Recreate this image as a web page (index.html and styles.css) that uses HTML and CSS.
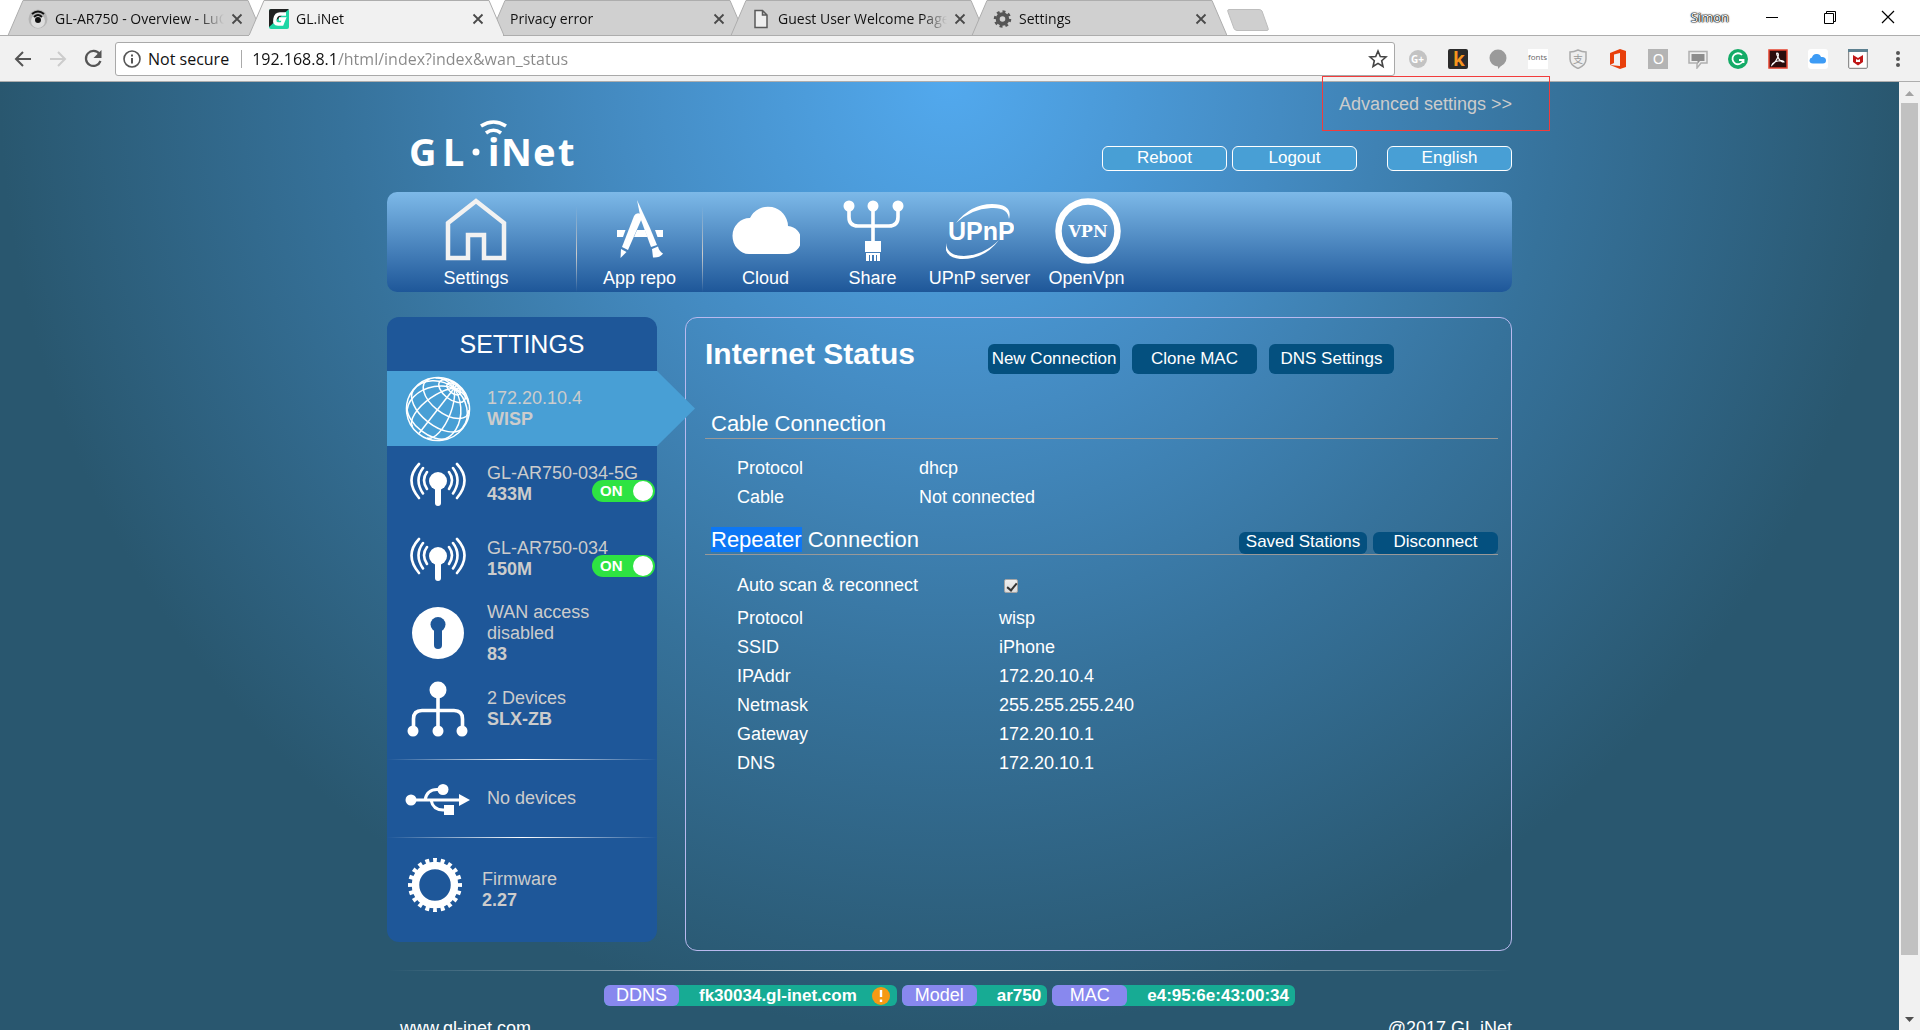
FILE: index.html
```html
<!DOCTYPE html>
<html lang="en">
<head>
<meta charset="utf-8">
<title>GL.iNet</title>
<link rel="stylesheet" href="styles.css">
</head>
<body>
<svg width="0" height="0" class="defs" aria-hidden="true">
  <symbol id="tab-shape" viewBox="0 0 256 36"><path d="M0 35.5H1L16 .5H241L256 35.500Z" fill="var(--tab-fill)" stroke="#adadad"/></symbol>
  <symbol id="x" viewBox="0 0 12 12"><path d="M1.500 1.500L10.500 10.500M10.500 1.500L1.500 10.500" stroke="#4a4a4a" stroke-width="1.800"/></symbol>
  <symbol id="antenna" viewBox="0 0 56 44">
    <circle cx="28" cy="19" r="9" fill="#fff"/><path d="M28 19V41" stroke="#fff" stroke-width="6" stroke-linecap="round"/>
    <g fill="none" stroke="#fff" stroke-width="2.600" stroke-linecap="round">
      <path d="M17 10Q11 18 17 27M13 6Q4 18 13 31.500M9 2Q-6 18 9 36"/>
      <path d="M39 10Q45 18 39 27M43 6Q52 18 43 31.500M47 2Q62 18 47 36"/>
    </g>
  </symbol>
</svg>

<header class="tabstrip">
  <nav class="tabs" aria-label="Tabs">
    <div class="tab"><svg class="tab-bg"><use href="#tab-shape"/></svg>
      <svg class="fav" viewBox="0 0 20 20"><circle cx="10" cy="10" r="9.500" fill="#b5b5b5"/><circle cx="10" cy="12" r="7" fill="#ddd"/><circle cx="10" cy="11" r="3" fill="#111"/><path d="M4 5Q10 0 16 5M6 8Q10 4 14 8" fill="none" stroke="#111" stroke-width="2"/></svg>
      <span class="tab-title">GL-AR750 - Overview - LuCI</span><svg class="tab-x"><use href="#x"/></svg></div>
    <div class="tab active"><svg class="tab-bg"><use href="#tab-shape"/></svg>
      <svg class="fav" viewBox="0 0 20 20"><rect width="20" height="20" rx="2" fill="#1ed6a5"/><path d="M0 2Q0 0 2 0H20L0 18Z" fill="#222"/><path d="M17 5H11Q7 5 6 10Q5 15 9 15H13L15 10H10" fill="none" stroke="#fff" stroke-width="3.500"/></svg>
      <span class="tab-title">GL.iNet</span><svg class="tab-x"><use href="#x"/></svg></div>
    <div class="tab"><svg class="tab-bg"><use href="#tab-shape"/></svg>
      <span class="tab-title">Privacy error</span><svg class="tab-x"><use href="#x"/></svg></div>
    <div class="tab"><svg class="tab-bg"><use href="#tab-shape"/></svg>
      <svg class="fav" viewBox="0 0 20 20"><path d="M4 1.500H11.500L16 6V18.500H4ZM11.500 1.500V6H16" fill="#eee" stroke="#5a5a5a" stroke-width="1.500"/></svg>
      <span class="tab-title">Guest User Welcome Page</span><svg class="tab-x"><use href="#x"/></svg></div>
    <div class="tab"><svg class="tab-bg"><use href="#tab-shape"/></svg>
      <svg class="fav" viewBox="0 0 20 20"><circle cx="10.500" cy="10" r="4.800" fill="none" stroke="#555" stroke-width="4"/><circle cx="10.500" cy="10" r="7.500" fill="none" stroke="#555" stroke-width="2.500" pathLength="16" stroke-dasharray="1 1"/></svg>
      <span class="tab-title">Settings</span><svg class="tab-x"><use href="#x"/></svg></div>
    <button class="new-tab" aria-label="New tab"><svg viewBox="0 0 42 22"><path d="M2 .5H32Q34 .5 35 2L41 19Q42 21.500 40 21.500H10Q8 21.500 7 19.500L1 3Q0 .5 2 .5Z" fill="#cfcfcf" stroke="#bdbdbd"/></svg></button>
  </nav>
  <div class="window-controls">
    <span class="user">Simon</span>
    <button aria-label="Minimize"><svg viewBox="0 0 14 14"><path d="M1 7.500H13" stroke="#000"/></svg></button>
    <button aria-label="Restore"><svg viewBox="0 0 14 14"><path d="M1.500 3.500H10.500V13.500H1.500ZM3.500 3.500V1.500H12.500V11.500H10.500" fill="none" stroke="#000"/></svg></button>
    <button aria-label="Close"><svg viewBox="0 0 14 14"><path d="M1 1L13 13M13 1L1 13" stroke="#000" stroke-width="1.200"/></svg></button>
  </div>
</header>

<div class="toolbar">
  <button aria-label="Back"><svg viewBox="0 0 20 20"><path d="M18 10H3M10 3L3 10L10 17" fill="none" stroke="#555" stroke-width="2"/></svg></button>
  <button aria-label="Forward"><svg viewBox="0 0 20 20"><path d="M2 10H17M10 3L17 10L10 17" fill="none" stroke="#ccc" stroke-width="2"/></svg></button>
  <button aria-label="Reload"><svg viewBox="0 0 20 20"><path d="M16.500 5A7.500 7.500 0 1 0 17.500 12" fill="none" stroke="#555" stroke-width="2.200"/><path d="M18.500 1V9H10.500Z" fill="#555"/></svg></button>
  <div class="omnibox">
    <svg viewBox="0 0 20 20"><circle cx="10" cy="10" r="8" fill="none" stroke="#555" stroke-width="1.600"/><path d="M10 9V14.500M10 5.500V7.500" stroke="#555" stroke-width="2"/></svg>
    <span class="secure">Not secure</span>
    <input class="url" type="text" aria-label="Address" value="192.168.8.1/html/index?index&amp;wan_status">
    <svg viewBox="0 0 20 20"><path d="M10 2L12.300 7.500L18 8L13.700 11.700L15 17.500L10 14.400L5 17.500L6.300 11.700L2 8L7.700 7.500Z" fill="none" stroke="#444" stroke-width="1.600"/></svg>
  </div>
  <div class="extensions">
    <svg viewBox="0 0 20 20"><circle cx="10" cy="10" r="9" fill="#c3c3c3"/><text x="3" y="14" class="ico-g">G+</text></svg>
    <svg viewBox="0 0 20 20"><rect width="20" height="20" rx="2" fill="#2b2b2b"/><text x="5" y="17" class="ico-k">k</text></svg>
    <svg viewBox="0 0 20 20"><circle cx="10" cy="9" r="8.500" fill="#9a9a9a"/><path d="M10 16V20L15 15Z" fill="#9a9a9a"/></svg>
    <svg viewBox="0 0 20 20"><rect width="20" height="20" fill="#fff"/><text x="0" y="11" class="ico-f">fonts</text></svg>
    <svg viewBox="0 0 20 20"><path d="M10 1Q14 3 18 3V10Q18 16 10 19.500Q2 16 2 10V3Q6 3 10 1Z" fill="#eee" stroke="#aaa" stroke-width="1.500"/><text x="5" y="14" class="ico-z">支</text></svg>
    <svg viewBox="0 0 20 20"><path d="M2 4L12 0L18 2V18L12 20L2 16L12 17V4L6 5.500V14L2 16Z" fill="#e8400c"/></svg>
    <svg viewBox="0 0 20 20"><rect width="20" height="20" fill="#b4b4b4"/><text x="5" y="15" class="ico-o">O</text></svg>
    <svg viewBox="0 0 20 20"><path d="M1 2.500H19V14H13L9 19V14H1Z" fill="#eee" stroke="#b0b0b0" stroke-width="1.500"/><path d="M3.500 5H16.500V12H12L9.500 15V12H3.500Z" fill="#8d8d8d"/></svg>
    <svg viewBox="0 0 20 20"><circle cx="10" cy="10" r="10" fill="#14ab67"/><path d="M14 6A5.500 5.500 0 1 0 15 12M11 11H15.500V14" fill="none" stroke="#fff" stroke-width="1.800"/></svg>
    <svg viewBox="0 0 20 20"><rect x="1" y="1" width="18" height="18" fill="#2a0c0c" stroke="#e5432f" stroke-width="1.500"/><path d="M9 4Q11 4 10 8Q8 13 4 16Q5 13 10 12Q16 11 16 13Q12 13 10 8Q8 5 9 4Z" fill="none" stroke="#fff" stroke-width="1.200"/></svg>
    <svg viewBox="0 0 20 20"><rect width="20" height="20" rx="3" fill="#fff"/><path d="M5 14.500Q1.500 14.500 1.500 11.500Q1.500 9 4 8.500Q5 4.500 9 5Q12 5 13 8Q18 7.500 18 11.500Q18 14.500 15 14.500Z" fill="#3d9bf5"/></svg>
    <svg viewBox="0 0 20 20"><rect x=".7" y=".7" width="18.600" height="18.600" rx="1" fill="#fff" stroke="#777"/><rect width="20" height="3" fill="#5d8191"/><path d="M5 6L10 9L15 6V13L10 16.500L5 13Z" fill="#c01818"/><path d="M8 10L10 11L12 10V13H8Z" fill="#fff"/></svg>
    <svg viewBox="0 0 20 20"><g fill="#555"><circle cx="10" cy="4" r="2"/><circle cx="10" cy="10" r="2"/><circle cx="10" cy="16" r="2"/></g></svg>
  </div>
</div>

<div class="page">
  <div class="viewport">
    <div class="container">
      <header class="masthead">
        <svg class="logo" viewBox="0 0 168 54" role="img" aria-label="GL-iNet">
          <g class="logo-text"><text x="0" y="49">G</text><text x="34" y="49">L</text><text x="79" y="49">i</text><text x="92" y="49">N</text><text x="124" y="49">e</text><text x="149" y="49">t</text></g>
          <circle cx="67" cy="35" r="3.500" fill="#fff"/>
          <path d="M77 16Q84.500 10.500 92 16M72 9Q84.500 1 97 9" fill="none" stroke="#fff" stroke-width="3.600"/>
        </svg>
        <div class="head-right">
          <a class="advanced" href="#">Advanced settings &gt;&gt;</a>
          <div class="head-buttons"><button>Reboot</button><button>Logout</button><button class="lang">English</button></div>
        </div>
        <div class="annotation"></div>
      </header>

      <nav class="mainnav" aria-label="Main">
        <a href="#" class="nav-settings"><svg viewBox="0 0 68 68"><path d="M6 27L34 5L62 27V62H42V39H26V62H6Z" fill="none" stroke="#f2f2f2" stroke-width="4.500"/></svg>Settings</a>
        <i class="sep"></i>
        <a href="#" class="nav-repo"><svg viewBox="0 0 68 68"><g fill="#fff"><path d="M11 34H19.500L17 41H11ZM31 34H39L41.500 41H28ZM49 34H57V41H51.500Z"/><path d="M28 20Q30 16 35 18L36 22L22 54L16 51Z"/><path d="M15 53L20.500 56L14.500 62Z"/><path d="M31 4L44 32L51 49L45 51L35 24Z"/><path d="M46 53L52 50.500Q53 55 57 57.500Q54 62 47 61.500Z"/></g></svg>App repo</a>
        <i class="sep last"></i>
        <a href="#"><svg viewBox="0 0 68 68"><path d="M17 58A17 18 0 0 1 18 22A20 20 0 0 1 56 30A14 14 0 0 1 54 58Z" fill="#fff"/></svg>Cloud</a>
        <a href="#"><svg viewBox="0 0 68 68"><g fill="#fff"><circle cx="10" cy="10" r="5.500"/><circle cx="34" cy="10" r="5.500"/><circle cx="59" cy="10" r="5.500"/><rect x="26" y="45" width="16" height="11"/><path d="M27 57H41V65H38V59H37V65H35V59H33V65H31V59H30V65H27Z"/></g><path d="M10 10V21Q10 30 19 30H50Q59 30 59 21V10M34 10V46" fill="none" stroke="#fff" stroke-width="3.600"/></svg>Share</a>
        <a href="#"><svg viewBox="0 0 68 68"><path d="M10 27Q25 8 46 8Q67 8 63 23Q62 11 45 12Q25 13 10 27ZM0 47Q1 60 18 60Q38 59 53 44Q38 64 14 63Q-3 61 0 47Z" fill="#fff"/><text x="2" y="44" class="upnp">UPnP</text></svg>UPnP server</a>
        <a href="#"><svg viewBox="0 0 68 68"><circle cx="35" cy="35" r="29.500" fill="none" stroke="#fff" stroke-width="6.500"/><text x="35" y="41" text-anchor="middle" class="vpn">VPN</text></svg>OpenVpn</a>
      </nav>

      <div class="columns">
        <aside class="sidebar">
          <h2>SETTINGS</h2>
          <a href="#" class="item active">
            <svg class="side-icon" viewBox="0 0 66 66"><g transform="translate(33 33) rotate(38)" fill="none" stroke="#fff" stroke-width="1.500">
              <circle r="31.500"/><path d="M0-31V31"/>
              <path d="M0-31A13.200 31 0 0 0 0 31" transform="rotate(17)"/><path d="M0-31A13.200 31 0 0 1 0 31" transform="rotate(-17)"/>
              <path d="M0-31A22.800 31 0 0 0 0 31" transform="rotate(42.500)"/><path d="M0-31A22.800 31 0 0 1 0 31" transform="rotate(-42.500)"/>
              <path d="M0-31A26.400 31 0 0 0 0 31" transform="rotate(90)"/>
              <path d="M-31 0A31 16.400 0 0 0 31 0M-25 18.300A26.800 14.200 0 0 0 25 18.300M-25-18.300A26.800 14.200 0 1 0 25-18.300"/>
              <ellipse cy="-22.800" rx="15.500" ry="8.200"/><ellipse cy="-25.500" rx="8" ry="4.300"/></g></svg>
            <span>172.20.10.4<b>WISP</b></span>
          </a>
          <div class="item">
            <svg class="side-icon antenna"><use href="#antenna"/></svg>
            <span>GL-AR750-034-5G<b>433M</b></span>
            <label class="switch"><input type="checkbox" checked aria-label="GL-AR750-034-5G">ON</label>
          </div>
          <div class="item">
            <svg class="side-icon antenna"><use href="#antenna"/></svg>
            <span>GL-AR750-034<b>150M</b></span>
            <label class="switch"><input type="checkbox" checked aria-label="GL-AR750-034">ON</label>
          </div>
          <a href="#" class="item">
            <svg class="side-icon" viewBox="0 1 66 66"><circle cx="33" cy="33" r="26" fill="#fff"/><circle cx="33" cy="24.500" r="7.500" fill="#1e5799"/><path d="M33 26V45" stroke="#1e5799" stroke-width="8" stroke-linecap="round"/></svg>
            <span>WAN access<br>disabled<b>83</b></span>
          </a>
          <a href="#" class="item">
            <svg class="side-icon" viewBox="0 1 66 66"><g fill="#fff"><circle cx="33" cy="15" r="8.500"/><circle cx="8" cy="56" r="5.500"/><circle cx="33" cy="56" r="5.500"/><circle cx="57" cy="56" r="5.500"/></g><path d="M33 15V56M8.500 56V44Q8.500 35.500 17 35.500H49Q57.500 35.500 57.500 44V56" fill="none" stroke="#fff" stroke-width="3.600"/></svg>
            <span>2 Devices<b>SLX-ZB</b></span>
          </a>
          <hr class="glow">
          <a href="#" class="item">
            <svg class="side-icon" viewBox="0 0 66 66"><g fill="#fff"><circle cx="6" cy="34" r="5.500"/><circle cx="38" cy="23.500" r="5.500"/><rect x="39" y="39" width="10" height="10"/><path d="M54 28L65 34L54 40Z"/></g><path d="M6 34H56M20 34Q22 23.500 32 23.500H38M26 34Q28 44 38 44H42" fill="none" stroke="#fff" stroke-width="3"/></svg>
            <span>No devices</span>
          </a>
          <hr class="glow flush">
          <a href="#" class="item firmware">
            <svg class="side-icon" viewBox="0 5 66 66"><circle cx="30" cy="33" r="19.500" fill="none" stroke="#fff" stroke-width="7.500"/><circle cx="30" cy="33" r="24.500" fill="none" stroke="#fff" stroke-width="5" pathLength="40" stroke-dasharray="1 1" stroke-dashoffset=".5"/></svg>
            <span>Firmware<b>2.27</b></span>
          </a>
        </aside>

        <main class="panel">
          <div class="title-row">
            <h1>Internet Status</h1>
            <button class="wide">New Connection</button><button>Clone MAC</button><button>DNS Settings</button>
          </div>
          <div class="section-head"><h2>Cable Connection</h2></div>
          <table class="cable">
            <tr><th scope="row">Protocol</th><td>dhcp</td></tr>
            <tr><th scope="row">Cable</th><td>Not connected</td></tr>
          </table>
          <div class="section-head second"><h2><span class="selected">Repeater</span> Connection</h2>
            <button class="short wide">Saved Stations</button><button class="short">Disconnect</button></div>
          <table class="repeater">
            <tr class="scan"><th scope="row"><label for="auto">Auto scan &amp; reconnect</label></th><td><input type="checkbox" id="auto" checked></td></tr>
            <tr><th scope="row">Protocol</th><td>wisp</td></tr>
            <tr><th scope="row">SSID</th><td>iPhone</td></tr>
            <tr><th scope="row">IPAddr</th><td>172.20.10.4</td></tr>
            <tr><th scope="row">Netmask</th><td>255.255.255.240</td></tr>
            <tr><th scope="row">Gateway</th><td>172.20.10.1</td></tr>
            <tr><th scope="row">DNS</th><td>172.20.10.1</td></tr>
          </table>
        </main>
      </div>

      <footer>
        <hr class="glow">
        <div class="badges">
          <div class="badge"><span>DDNS</span><b>fk30034.gl-inet.com</b><svg viewBox="0 0 20 20"><circle cx="10" cy="10" r="9" fill="#f59a14"/><path d="M10 4V11M10 13.500V16" stroke="#fff" stroke-width="2.400"/></svg></div>
          <div class="badge"><span>Model</span><b>ar750</b></div>
          <div class="badge"><span>MAC</span><b>e4:95:6e:43:00:34</b></div>
        </div>
        <div class="legal"><a href="#">www.gl-inet.com</a><span>@2017 GL.iNet</span></div>
      </footer>
    </div>
  </div>
  <div class="scrollbar" aria-hidden="true">
    <svg viewBox="0 0 21 21"><path d="M6 14L10.500 9L15 14Z" fill="#a3a3a3"/></svg>
    <div class="track"><div class="thumb"></div></div>
    <svg viewBox="0 0 21 21"><path d="M6 8L10.500 13L15 8Z" fill="#505050"/></svg>
  </div>
</div>
</body>
</html>
```
FILE: styles.css
```css
* { box-sizing: border-box; }
body {
  margin: 0;
  height: 100vh;
  overflow: hidden;
  display: flex;
  flex-direction: column;
  font: 18px/21px "Liberation Sans", Arial, sans-serif;
  color: #fff;
}
a { color: inherit; text-decoration: none; }
button { font: inherit; color: inherit; border: 0; padding: 0; background: none; }
h1, h2 { margin: 0; font-weight: 400; }
svg { display: block; flex: none; }
.defs { position: absolute; }

/* browser frame */
.tabstrip {
  height: 36px;
  flex: none;
  display: flex;
  justify-content: space-between;
  background: #fff;
  box-shadow: inset 0 -1px #adadad;
  font: 14px/20px "Open Sans", "Noto Sans", sans-serif;
  color: #111;
}
.tabs { display: flex; padding-left: 7px; }
.tab {
  --tab-fill: #d0d0d0;
  position: relative;
  width: 256px;
  margin-right: -15px;
  padding: 2px 20px 0 21px;
  display: flex;
  align-items: center;
  gap: 7px;
}
.tab.active { --tab-fill: #f1f1f1; z-index: 1; }
.tab.active::after { content: ""; position: absolute; left: 1px; right: 1px; bottom: 0; height: 1px; background: #f1f1f1; }
.tab-bg { position: absolute; inset: 0; width: 256px; height: 36px; }
.fav { position: relative; width: 20px; height: 20px; }
.tab-title {
  position: relative;
  flex: 1;
  overflow: hidden;
  white-space: nowrap;
  mask-image: linear-gradient(90deg, #000 85%, transparent);
}
.tab-x { position: relative; width: 12px; height: 12px; }
.new-tab { margin: 9px 0 0 15px; height: 22px; }
.new-tab svg { width: 42px; height: 22px; }
.window-controls { display: flex; align-items: center; gap: 44px; padding: 0 25px 2px 0; }
.window-controls svg { width: 14px; height: 14px; }
.user { font-size: 13px; color: #fff; text-shadow: 0 0 1px #000, 0 0 1px #000, 0 0 1px #000, 0 0 2px #000; margin-right: -8px; }

.toolbar {
  height: 46px;
  flex: none;
  display: flex;
  align-items: center;
  gap: 15px;
  padding: 0 12px 0 13px;
  background: #f1f1f1;
  border-bottom: 1px solid #adadad;
  font: 16px/24px "Open Sans", "Noto Sans", sans-serif;
  color: #111;
}
.toolbar svg { width: 20px; height: 20px; }
.omnibox {
  flex: 1;
  height: 34px;
  margin-left: -3px;
  display: flex;
  align-items: center;
  gap: 6px;
  padding: 0 6px;
  background: #fff;
  border: 1px solid #a9a9a9;
  border-radius: 3px;
}
.secure { padding-right: 12px; line-height: 18px; border-right: 1px solid #aaa; }
.url {
  flex: 1;
  border: 0;
  outline: 0;
  padding: 0 0 0 4px;
  font: inherit;
  color: transparent;
  background: linear-gradient(90deg, #111 90px, #888 90px);
  background-clip: text;
}
.extensions { display: flex; gap: 20px; margin-left: -2px; }
.ico-g { font: 700 10px "Open Sans", sans-serif; fill: #fff; }
.ico-k { font: 700 19px "Open Sans", sans-serif; fill: #f7941d; }
.ico-f { font: 8px "Open Sans", sans-serif; fill: #666; }
.ico-z { font: 10px "Noto Sans CJK SC", sans-serif; fill: #999; }
.ico-o { font: 14px "Liberation Sans", sans-serif; fill: #fff; }

/* web page */
.page { flex: 1; min-height: 0; display: flex; }
.viewport {
  flex: 1;
  min-width: 0;
  background: radial-gradient(circle 950px at 50% 0, #52a9ee, #448bc2 35%, #36729b 64%, #29576f);
}
.container { width: 1125px; max-width: 100%; margin: 0 auto; }

.masthead { position: relative; display: flex; justify-content: space-between; padding: 11px 0 21px; }
.logo { width: 168px; height: 54px; margin: 24px 0 0 22px; }
.logo-text { font: 700 38px "Noto Sans", sans-serif; fill: #fff; }
.head-right { display: flex; flex-direction: column; align-items: flex-end; gap: 31px; }
.advanced { line-height: 22px; color: #ccc; }
.head-buttons { display: flex; gap: 5px; }
.head-buttons button {
  width: 125px;
  height: 25px;
  padding-bottom: 2px;
  font-size: 17px;
  background: #489fd5;
  border: 1px solid #fff;
  border-radius: 6px;
}
.head-buttons .lang { margin-left: 25px; }
.annotation { position: absolute; top: -6px; right: -38px; width: 228px; height: 55px; border: 1px solid #f23c3c; pointer-events: none; }

.mainnav {
  display: flex;
  height: 100px;
  padding-top: 4px;
  border-radius: 10px;
  background: linear-gradient(#7db9e8, #1e5799);
  white-space: nowrap;
}
.mainnav a { width: 107px; display: flex; flex-direction: column; align-items: center; gap: 4px; }
.mainnav svg { width: 68px; height: 68px; }
.mainnav .nav-settings { width: 178px; margin-right: 11px; }
.mainnav .nav-repo { width: 125px; }
.sep { width: 1px; background: linear-gradient(transparent 10%, #ccc 60%, transparent); }
.sep.last { margin-right: 9px; }
.upnp { font: 700 25px "Liberation Sans", sans-serif; fill: #fff; }
.vpn { font: 700 16px "DejaVu Serif", serif; fill: #fff; }

.columns { display: flex; align-items: flex-start; gap: 28px; margin-top: 25px; }
.sidebar { width: 270px; flex: none; padding-bottom: 15px; border-radius: 12px; background: #1e5799; }
.sidebar h2 { font-size: 25px; line-height: 54px; text-align: center; }
.item { position: relative; height: 75px; padding-left: 18px; display: flex; align-items: center; gap: 16px; color: #ccc; }
.item b { display: block; }
.side-icon { width: 66px; height: 66px; }
.side-icon.antenna { width: 56px; height: 44px; margin: 0 5px; }
.item.active { background: #489fd5; }
.item.active::after { content: ""; position: absolute; left: 100%; top: 0; width: 38px; height: 75px; background: #489fd5; clip-path: polygon(0 0, 100% 50%, 0 100%); }
.item.firmware { gap: 11px; }
.switch {
  position: absolute;
  right: 2px;
  top: 34px;
  width: 63px;
  height: 22px;
  padding-left: 8px;
  border-radius: 11px;
  background: #2ee342;
  color: #fff;
  font: 700 15px/22px "Liberation Sans", Arial, sans-serif;
}
.switch input { appearance: none; position: absolute; right: 2px; top: 1px; margin: 0; width: 20px; height: 20px; border-radius: 50%; background: #fff; }
.glow { margin: 13px 0 1px; border: 0; height: 1px; background: linear-gradient(90deg, transparent, #fff, transparent); }
.glow.flush { margin: 1px 0 14px; }

.panel { flex: 1; height: 634px; padding: 26px 13px 0 19px; border: 1px solid #b9b9ee; border-radius: 12px; }
.panel button { width: 125px; height: 30px; padding-bottom: 2px; font-size: 17px; border-radius: 6px; background: #04507f; }
.panel .wide { width: 132px; }
.title-row { display: flex; gap: 12px; }
h1 { width: 271px; font-size: 30px; line-height: 20px; font-weight: 700; white-space: nowrap; }
.section-head { display: flex; align-items: flex-end; gap: 6px; height: 65px; border-bottom: 1px solid #999; }
.section-head h2 { flex: 1; padding: 0 6px 2px; font-size: 22px; line-height: 24px; }
.section-head.second { height: 30px; margin-top: 13px; }
.panel .short { height: 22px; line-height: 20px; }
.panel .short.wide { width: 128px; }
.selected { background: #0d77f5; }
table { border-collapse: collapse; margin-left: 32px; }
th, td { padding: 0; height: 29px; font-weight: 400; text-align: left; }
.cable { margin-top: 15px; }
.cable th { width: 182px; }
.repeater { margin-top: 14px; }
.repeater th { width: 262px; }
.scan th, .scan td { height: 35px; vertical-align: top; padding-top: 6px; }
.scan td input {
  appearance: none;
  position: relative;
  display: block;
  width: 14px;
  height: 14px;
  margin: 4px 0 0 5px;
  border: 1px solid #a5a5a5;
  border-radius: 2px;
  background: linear-gradient(#eee, #ddd);
}
.scan td input:checked::after { content: ""; position: absolute; left: 4px; top: 1px; width: 4px; height: 8px; border: solid #333; border-width: 0 2px 2px 0; transform: rotate(40deg); }

footer .glow { margin: 19px 0 14px; }
.badges { display: flex; justify-content: center; gap: 5px; }
.badge { display: flex; align-items: center; height: 21px; padding-right: 6px; border-radius: 6px; background: #17ab94; }
.badge span { width: 75px; text-align: center; border-radius: 6px; background: #8888ee; }
.badge b { padding-left: 20px; font-size: 17px; }
.badge svg { width: 20px; height: 20px; margin-left: 14px; }
.legal { display: flex; justify-content: space-between; padding: 12px 0 20px 13px; }

.scrollbar { width: 21px; flex: none; display: flex; flex-direction: column; background: #f1f1f1; }
.scrollbar svg { width: 21px; height: 21px; }
.track { flex: 1; padding: 0 2px; }
.thumb { height: 94%; background: #c1c1c1; }
```
